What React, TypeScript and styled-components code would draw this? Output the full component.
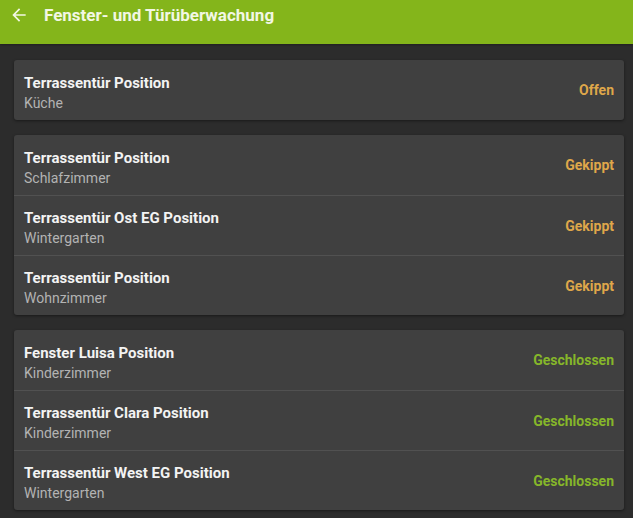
import { createGlobalStyle, styled } from "styled-components";

const GlobalStyle = createGlobalStyle`
    body {
        margin: 0;
        background: #2c2c2c;
        font-family: Roboto, "Noto Sans", sans-serif;
    }
`;

const Page = styled.div`
    min-height: 518px;
    background: #2c2c2c;
`;

const Header = styled.header`
    height: 44px;
    background: #84b51b;
    display: flex;
    align-items: center;
    padding: 0 0 0 9px;
    box-sizing: border-box;
    box-shadow: 0 1px 2px rgba(0, 0, 0, 0.3);
`;

const BackButton = styled.button`
    width: 20px;
    height: 20px;
    padding: 0;
    border: none;
    background: none;
    display: flex;
    align-items: center;
    justify-content: center;
    color: #f2f7e4;
    margin: -14px 15px 0 0;
`;

const Title = styled.h1`
    margin: -14px 0 0 0;
    font-size: 17px;
    font-weight: 700;
    color: #f2f7e4;
`;

const Content = styled.main`
    display: flex;
    flex-direction: column;
    gap: 15px;
    padding: 16px 9px 0 14px;
`;

const Card = styled.section`
    background: #404040;
    border-radius: 3px;
    box-shadow: 0 1px 3px rgba(0, 0, 0, 0.45);
`;

const Row = styled.div`
    height: 60px;
    display: flex;
    align-items: center;
    justify-content: space-between;
    padding: 0 10px;
    & + & {
        border-top: 1px solid #515151;
        height: 59px;
    }
`;

const Column = styled.div`
    display: flex;
    flex-direction: column;
    gap: 2px;
    padding-top: 5px;
`;

const Name = styled.span`
    font-size: 15px;
    line-height: 18px;
    font-weight: 700;
    color: #f3f3f3;
`;

const Room = styled.span`
    font-size: 14px;
    line-height: 18px;
    color: #b3b3b3;
`;

const Status = styled.span<{ $state: string }>`
    font-size: 14px;
    font-weight: 700;
    color: ${(p) => (p.$state === "Geschlossen" ? "#86b62a" : "#dfa74a")};
`;

type Sensor = { name: string; room: string; state: string };

const groups: Sensor[][] = [
    [{ name: "Terrassentür Position", room: "Küche", state: "Offen" }],
    [
        { name: "Terrassentür Position", room: "Schlafzimmer", state: "Gekippt" },
        { name: "Terrassentür Ost EG Position", room: "Wintergarten", state: "Gekippt" },
        { name: "Terrassentür Position", room: "Wohnzimmer", state: "Gekippt" },
    ],
    [
        { name: "Fenster Luisa Position", room: "Kinderzimmer", state: "Geschlossen" },
        { name: "Terrassentür Clara Position", room: "Kinderzimmer", state: "Geschlossen" },
        { name: "Terrassentür West EG Position", room: "Wintergarten", state: "Geschlossen" },
    ],
];

export default function App() {
    return (
        <Page>
            <GlobalStyle />
            <Header>
                <BackButton aria-label="Zurück">
                    <svg width="20" height="20" viewBox="0 0 24 24" fill="currentColor">
                        <path d="M20 11H7.83l5.59-5.59L12 4l-8 8 8 8 1.41-1.41L7.83 13H20v-2z" />
                    </svg>
                </BackButton>
                <Title>Fenster- und Türüberwachung</Title>
            </Header>
            <Content>
                {groups.map((group, i) => (
                    <Card key={i}>
                        {group.map((s, j) => (
                            <Row key={j}>
                                <Column>
                                    <Name>{s.name}</Name>
                                    <Room>{s.room}</Room>
                                </Column>
                                <Status $state={s.state}>{s.state}</Status>
                            </Row>
                        ))}
                    </Card>
                ))}
            </Content>
        </Page>
    );
}
